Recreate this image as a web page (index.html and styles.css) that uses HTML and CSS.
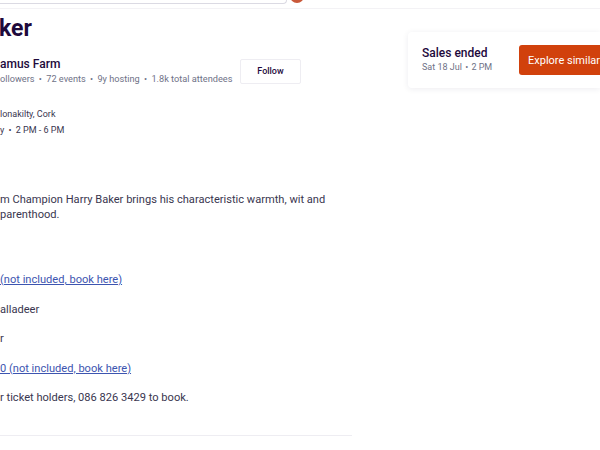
FILE: index.html
```html
<!DOCTYPE html>
<html lang="en">
<head>
  <meta charset="UTF-8">
  <title>Harry Baker</title>
  <link rel="stylesheet" href="styles.css">
</head>
<body>
  <div class="topbar">
    <div class="search-box"></div>
    <div class="avatar-dot"></div>
  </div>

  <div class="page">
    <div class="main-col">
      <h1 class="event-title">ker</h1>

      <div class="organizer">
        <div class="organizer-info">
          <div class="organizer-name">amus Farm</div>
          <div class="organizer-stats">ollowers <span class="dot">•</span> 72 events <span class="dot">•</span> 9y hosting <span class="dot">•</span> 1.8k total attendees</div>
        </div>
        <button class="follow-btn">Follow</button>
      </div>

      <div class="when-where">
        <div class="ww-line">lonakilty, Cork</div>
        <div class="ww-line">y <span class="dot">•</span> 2 PM - 6 PM</div>
      </div>

      <div class="about">
        <p class="summary">m Champion Harry Baker brings his characteristic warmth, wit and<br>parenthood.</p>
        <p class="detail"><a href="#">(not included, book here)</a></p>
        <p class="detail">alladeer</p>
        <p class="detail">r</p>
        <p class="detail"><a href="#">0 (not included, book here)</a></p>
        <p class="detail">r ticket holders, 086 826 3429 to book.</p>
      </div>

      <div class="divider"></div>
    </div>

    <div class="side-col">
      <div class="ticket-card">
        <div class="ticket-text">
          <div class="ticket-status">Sales ended</div>
          <div class="ticket-date">Sat 18 Jul <span class="dot">•</span> 2 PM</div>
        </div>
        <button class="explore-btn">Explore similar events</button>
      </div>
    </div>
  </div>
</body>
</html>
```

FILE: styles.css
```css
body {
  margin: 0;
  padding: 0;
  overflow: hidden;
  background: #fff;
  font-family: Roboto, "Noto Sans", sans-serif;
  color: #39364f;
}
.topbar {
  display: flex;
  align-items: flex-start;
  height: 8px;
  border-bottom: 1px solid #f3f2f5;
}
.search-box {
  width: 286px;
  height: 3px;
  border-bottom: 1px solid #dbdae3;
  border-right: 1px solid #dbdae3;
  border-bottom-right-radius: 4px;
}
.avatar-dot {
  width: 14px;
  height: 14px;
  margin-top: -11px;
  margin-left: 3px;
  border-radius: 50%;
  background: #c9593a;
}
.page {
  display: flex;
  align-items: flex-start;
}
.main-col {
  width: 352px;
  flex-shrink: 0;
  white-space: nowrap;
}
.event-title {
  margin: 6px 0 0 -1px;
  font-size: 23px;
  line-height: 28px;
  font-weight: 700;
  color: #1e0a3c;
}
.organizer {
  display: flex;
  align-items: center;
  justify-content: space-between;
  margin-top: 14px;
  width: 301px;
}
.organizer-name {
  font-size: 12px;
  line-height: 15px;
  font-weight: 500;
  color: #1e0a3c;
}
.organizer-stats {
  margin-top: 0;
  font-size: 9.2px;
  line-height: 13px;
  color: #6f7287;
}
.dot {
  margin: 0 2px;
}
.follow-btn {
  width: 61px;
  height: 25px;
  border: 1px solid #eeedf2;
  border-radius: 2px;
  background: #fff;
  font-family: inherit;
  font-size: 9px;
  font-weight: 500;
  color: #1e0a3c;
  padding: 0;
}
.when-where {
  margin-top: 21px;
}
.ww-line {
  font-size: 9px;
  line-height: 16px;
  color: #39364f;
}
.about {
  margin-top: 55px;
}
.summary {
  margin: 0;
  font-size: 11.1px;
  line-height: 14.5px;
  color: #39364f;
}
.detail {
  margin: 0;
  margin-top: 15px;
  font-size: 11.1px;
  line-height: 14.5px;
}
.about .summary + .detail {
  margin-top: 51px;
}
.detail a {
  color: #3d55b0;
  text-decoration: underline;
}
.divider {
  margin-top: 29px;
  height: 1px;
  background: #eeedf2;
}
.side-col {
  margin-left: 56px;
  flex: 1;
  min-width: 0;
}
.ticket-card {
  display: flex;
  align-items: center;
  margin-top: 23px;
  height: 56px;
  padding-left: 14px;
  border-radius: 4px 0 0 4px;
  background: #fff;
  box-shadow: 0 1px 6px rgba(30, 10, 60, 0.08);
  white-space: nowrap;
  overflow: hidden;
}
.ticket-text {
  width: 97px;
  flex-shrink: 0;
}
.ticket-status {
  font-size: 12px;
  line-height: 15px;
  font-weight: 500;
  color: #1e0a3c;
}
.ticket-date {
  font-size: 9px;
  line-height: 13px;
  color: #6f7287;
}
.ticket-date .dot {
  margin: 0 1px;
}
.explore-btn {
  flex-shrink: 0;
  height: 30px;
  padding: 0 9px;
  border: none;
  border-radius: 3px;
  background: #d1410c;
  color: #fff;
  font-family: inherit;
  font-size: 11px;
  font-weight: 400;
  white-space: nowrap;
}
```
